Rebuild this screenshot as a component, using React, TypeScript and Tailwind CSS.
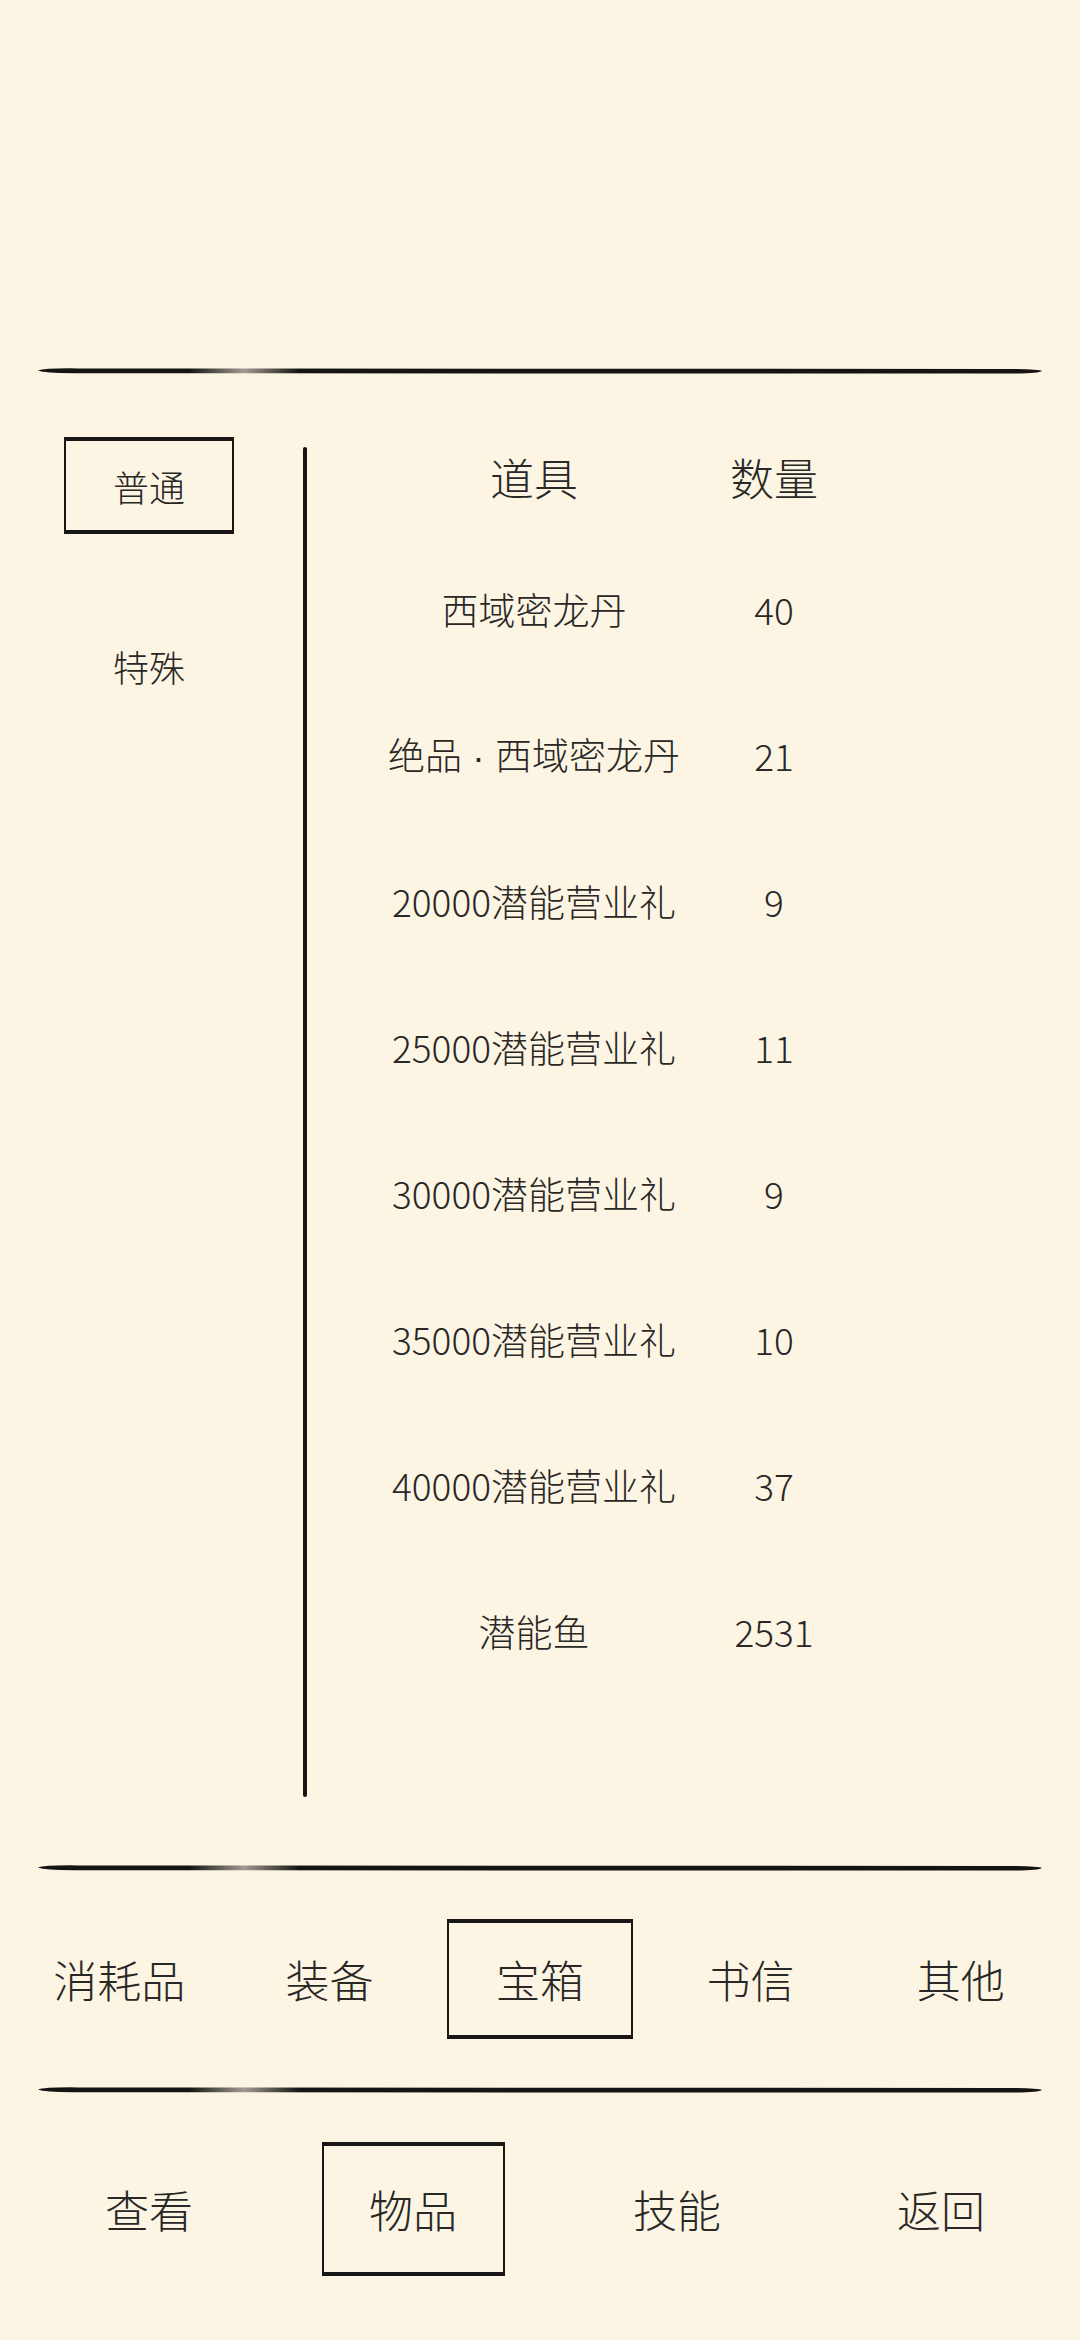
const items = [
  { name: "西域密龙丹", count: "40" },
  { name: "绝品·西域密龙丹", count: "21", dot: true },
  { name: "20000潜能营业礼", count: "9" },
  { name: "25000潜能营业礼", count: "11" },
  { name: "30000潜能营业礼", count: "9" },
  { name: "35000潜能营业礼", count: "10" },
  { name: "40000潜能营业礼", count: "37" },
  { name: "潜能鱼", count: "2531" },
];

const kinds = ["消耗品", "装备", "宝箱", "书信", "其他"];
const menu = ["查看", "物品", "技能", "返回"];

// ink brush stroke used for the horizontal dividers
function Brush() {
  return (
    <div className="relative mx-[38px] h-[8px]">
      <svg viewBox="0 0 1000 8" preserveAspectRatio="none" className="block h-full w-full">
        <path d="M0 3.6 Q6 1 40 1.4 L960 2 Q996 1.8 1000 4 Q996 6.8 960 6.6 L40 6.2 Q6 6.4 0 3.6Z" fill="#151412" />
      </svg>
      <div className="absolute inset-y-0 left-[15%] w-[11%] bg-gradient-to-r from-transparent via-[#fcf5e4]/60 to-transparent" />
    </div>
  );
}

function Framed({ label, className }: { label: string; className: string }) {
  return (
    <div className={`flex items-center justify-center border-x-[2px] border-y-[4px] border-[#181716] ${className}`}>
      {label}
    </div>
  );
}

function ItemName({ name, dot }: { name: string; dot?: boolean }) {
  if (!dot) return <>{name}</>;
  const [a, b] = name.split("·");
  return (
    <>
      {a}
      <span style={{ fontFamily: '"Liberation Sans", sans-serif' }}> · </span>
      {b}
    </>
  );
}

export default function App() {
  return (
    <div
      className="flex h-[2340px] w-[1080px] flex-col bg-[#fcf5e4] text-[#292826]"
      style={{ fontFamily: '"Noto Sans CJK SC", "Noto Sans", sans-serif' }}
    >
      <div className="h-[367px]" />
      <Brush />

      <div className="flex h-[1489px]">
        <div className="flex w-[298px] flex-col items-center pt-[62px] text-[36px] font-light">
          <Framed label="普通" className="h-[97px] w-[170px]" />
          <div className="mt-[105px]">特殊</div>
        </div>

        <div className="ml-[5px] mt-[72px] h-[1350px] w-[4px] rounded-full bg-[#171614]" />

        <div className="flex flex-col pl-[77px] pt-[42px]">
          <div className="flex h-[120px] items-center text-[44px] font-light">
            <div className="w-[300px] text-center">道具</div>
            <div className="w-[180px] text-center">数量</div>
          </div>
          {items.map((it) => (
            <div key={it.name} className="flex h-[146px] items-center text-[37px] font-light">
              <div className="w-[300px] whitespace-nowrap text-center">
                <ItemName name={it.name} dot={it.dot} />
              </div>
              <div className="w-[180px] text-center">{it.count}</div>
            </div>
          ))}
        </div>
      </div>

      <Brush />
      <div className="grid h-[214px] grid-cols-5 items-center px-[14px] text-[44px] font-light">
        {kinds.map((k) => (
          <div key={k} className="flex justify-center">
            {k === "宝箱" ? (
              <Framed label={k} className="h-[120px] w-[186px]" />
            ) : (
              <span>{k}</span>
            )}
          </div>
        ))}
      </div>

      <Brush />
      <div className="grid h-[230px] grid-cols-4 items-center pl-[17px] pr-[7px] text-[44px] font-light">
        {menu.map((m) => (
          <div key={m} className="flex justify-center">
            {m === "物品" ? (
              <Framed label={m} className="h-[134px] w-[183px]" />
            ) : (
              <span>{m}</span>
            )}
          </div>
        ))}
      </div>
    </div>
  );
}
